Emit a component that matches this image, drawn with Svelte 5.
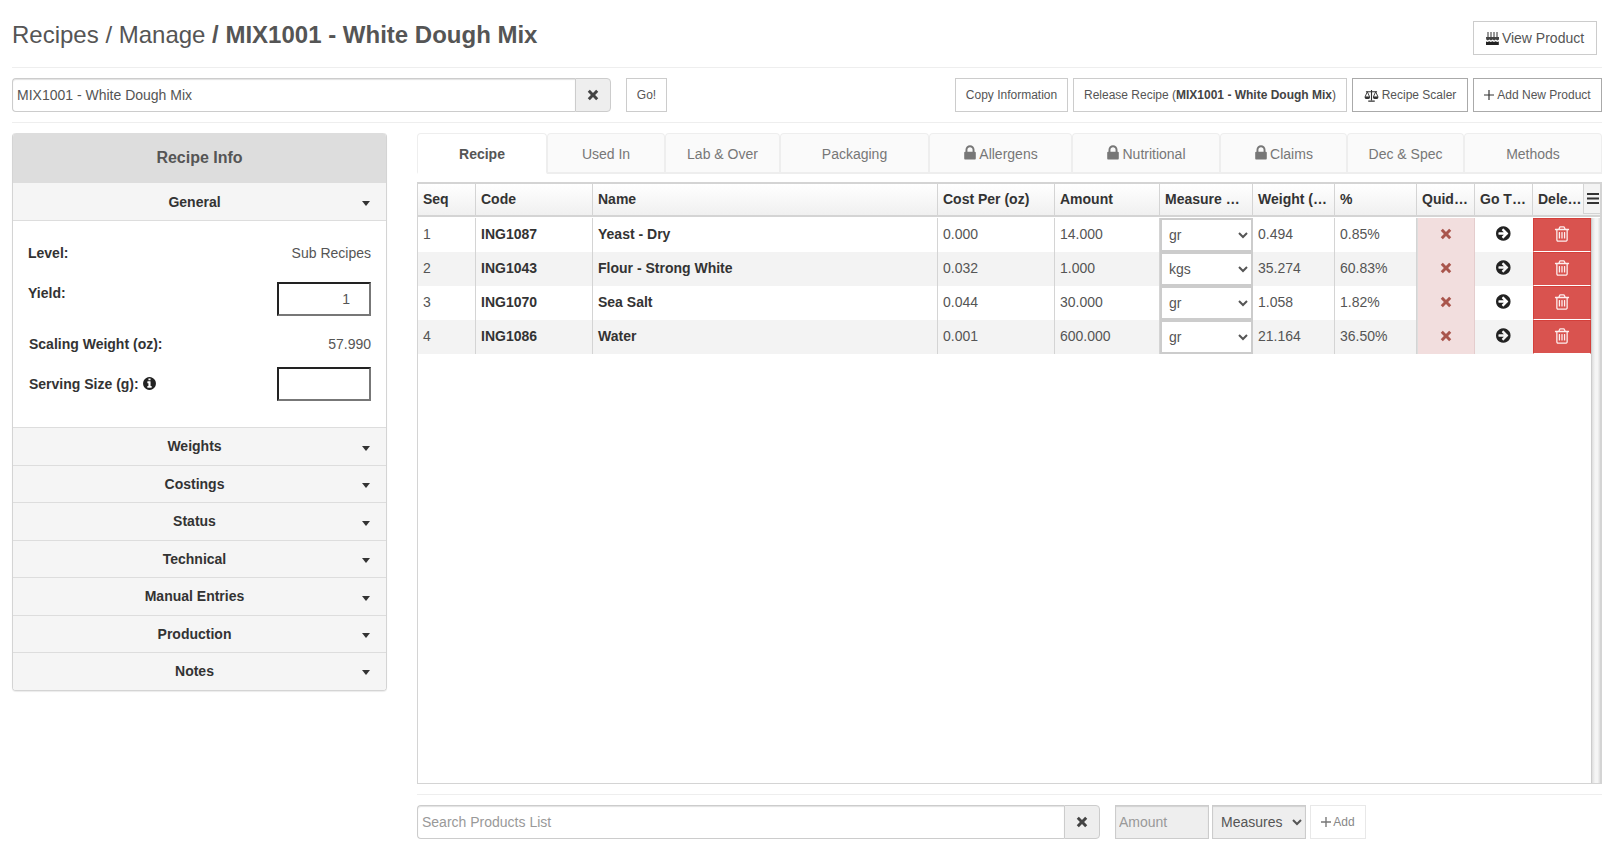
<script>
  const P = {
    lock: 'M640 768h512v-192q0-106-75-181t-181-75-181 75-75 181v192zm832 96v576q0 40-28 68t-68 28h-960q-40 0-68-28t-28-68v-576q0-40 28-68t68-28h32v-192q0-184 132-316t316-132 316 132 132 316v192h32q40 0 68 28t28 68z',
    go: 'M1285 896q0-27-18-45l-91-91-362-362q-18-18-45-18t-45 18l-91 91q-18 18-18 45t18 45l189 189h-502q-26 0-45 19t-19 45v128q0 26 19 45t45 19h502l-189 189q-19 19-19 45t19 45l91 91q18 18 45 18t45-18l362-362 91-91q18-18 18-45zm251 0q0 209-103 385.5t-279.5 279.5-385.5 103-385.5-103-279.5-279.5-103-385.5 103-385.5 279.5-279.5 385.5-103 385.5 103 279.5 279.5 103 385.5z',
    info: 'M1152 1376v-160q0-14-9-23t-23-9h-96v-512q0-14-9-23t-23-9h-320q-14 0-23 9t-9 23v160q0 14 9 23t23 9h96v320h-96q-14 0-23 9t-9 23v160q0 14 9 23t23 9h448q14 0 23-9t9-23zm-128-896v-160q0-14-9-23t-23-9h-192q-14 0-23 9t-9 23v160q0 14 9 23t23 9h192q14 0 23-9t9-23zm640 416q0 209-103 385.5t-279.5 279.5-385.5 103-385.5-103-279.5-279.5-103-385.5 103-385.5 279.5-279.5 385.5-103 385.5 103 279.5 279.5 103 385.5z',
    trash: 'M704 736v576q0 14-9 23t-23 9h-64q-14 0-23-9t-9-23v-576q0-14 9-23t23-9h64q14 0 23 9t9 23zm256 0v576q0 14-9 23t-23 9h-64q-14 0-23-9t-9-23v-576q0-14 9-23t23-9h64q14 0 23 9t9 23zm256 0v576q0 14-9 23t-23 9h-64q-14 0-23-9t-9-23v-576q0-14 9-23t23-9h64q14 0 23 9t9 23zm128 724v-948h-896v948q0 22 7 40.5t14.5 27 10.5 8.5h832q3 0 10.5-8.5t14.5-27 7-40.5zm-672-1076h448l-48-117q-7-9-17-11h-317q-10 2-17 11zm928 32v64q0 14-9 23t-23 9h-96v948q0 83-47 143.5t-113 60.5h-832q-66 0-113-58.5t-47-141.5v-952h-96q-14 0-23-9t-9-23v-64q0-14 9-23t23-9h309l70-167q15-37 54-63t79-26h320q40 0 79 26t54 63l70 167h309q14 0 23 9t9 23z'
  };
  const tabs = [
    { t: 'Recipe', w: 130, active: true },
    { t: 'Used In', w: 118 },
    { t: 'Lab & Over', w: 115 },
    { t: 'Packaging', w: 149 },
    { t: 'Allergens', w: 143, lock: true },
    { t: 'Nutritional', w: 148, lock: true },
    { t: 'Claims', w: 127, lock: true },
    { t: 'Dec & Spec', w: 117 },
    { t: 'Methods', w: 138 }
  ];
  const cols = ['Seq', 'Code', 'Name', 'Cost Per (oz)', 'Amount', 'Measure …', 'Weight (…', '%', 'Quid…', 'Go T…', 'Dele…'];
  const rows = [
    ['1', 'ING1087', 'Yeast - Dry', '0.000', '14.000', 'gr', '0.494', '0.85%'],
    ['2', 'ING1043', 'Flour - Strong White', '0.032', '1.000', 'kgs', '35.274', '60.83%'],
    ['3', 'ING1070', 'Sea Salt', '0.044', '30.000', 'gr', '1.058', '1.82%'],
    ['4', 'ING1086', 'Water', '0.001', '600.000', 'gr', '21.164', '36.50%']
  ];
  const sections = ['Weights', 'Costings', 'Status', 'Technical', 'Manual Entries', 'Production', 'Notes'];
</script>

{#snippet fa(name, cls)}
  <svg class={cls} viewBox="0 0 1792 1792" aria-hidden="true"><path d={P[name]} fill="currentColor" /></svg>
{/snippet}

{#snippet cross(cls)}
  <svg class={cls} viewBox="0 0 12 12" aria-hidden="true">
    <path d="M1.5 3.3 3.3 1.5 6 4.2 8.7 1.5 10.5 3.3 7.8 6 10.5 8.7 8.7 10.5 6 7.8 3.3 10.5 1.5 8.7 4.2 6z" fill="currentColor" />
  </svg>
{/snippet}

{#snippet caret()}
  <svg class="caret" viewBox="0 0 8 5" aria-hidden="true"><path d="M0 0h8L4 5z" fill="#333" /></svg>
{/snippet}

<div class="page">
  <header class="titlebar">
    <h1>Recipes / Manage <b>/ MIX1001 - White Dough Mix</b></h1>
    <button class="btn view">
      <svg class="cake" viewBox="0 0 13 14" aria-hidden="true">
        <path d="M2 1v5M5 1v5M8 1v5M11 1v5" stroke="#333" stroke-width="1" fill="none" />
        <path d="M0 6h13v2.6l-1.6.9-1.6-.9-1.6.9-1.6-.9-1.6.9-1.6-.9-1.6.9-1.6-.9z" fill="#444" />
        <path d="M0 10.4l1.6.7 1.6-.8 1.6.8 1.6-.8 1.6.8 1.6-.8 1.6.8 1.6-.7V14H0z" fill="#222" />
      </svg>
      View Product
    </button>
  </header>

  <section class="toolbar">
    <div class="group main-search">
      <input class="field" value="MIX1001 - White Dough Mix" />
      <span class="addon">{@render cross('x')}</span>
    </div>
    <button class="btn small go">Go!</button>
    <div class="actions">
      <button class="btn small copy">Copy Information</button>
      <button class="btn small release">Release Recipe (<b>MIX1001 - White Dough Mix</b>)</button>
      <button class="btn small dark scaler">
        <svg class="scale" viewBox="0 0 16 14" aria-hidden="true">
          <path d="M8 1v11M4.5 13h7M2 3h12" stroke="#333" stroke-width="1.2" fill="none" />
          <path d="M3.5 3 1 8.5h5zM12.5 3 10 8.5h5z" stroke="#333" stroke-width="1" fill="none" />
          <path d="M.6 8.5h5.8a2.9 2.4 0 0 1-5.8 0zM9.6 8.5h5.8a2.9 2.4 0 0 1-5.8 0z" fill="#333" />
        </svg>
        Recipe Scaler
      </button>
      <button class="btn small dark addnew">
        <svg class="plus" viewBox="0 0 11 11" aria-hidden="true"><path d="M5.5 0v11M0 5.5h11" stroke="#333" stroke-width="1.3" /></svg>
        Add New Product
      </button>
    </div>
  </section>

  <div class="content">
    <aside class="panel">
      <h2>Recipe Info</h2>
      <div class="acc first"><span>General</span>{@render caret()}</div>
      <div class="general">
        <div class="line level"><strong>Level:</strong><span>Sub Recipes</span></div>
        <div class="line yield"><strong>Yield:</strong><input class="box" value="1" /></div>
        <div class="line scaling"><strong>Scaling Weight (oz):</strong><span>57.990</span></div>
        <div class="line serving">
          <strong>Serving Size (g): {@render fa('info', 'info')}</strong>
          <input class="box" />
        </div>
      </div>
      {#each sections as s}
        <div class="acc"><span>{s}</span>{@render caret()}</div>
      {/each}
    </aside>

    <main class="right">
      <nav class="tabs">
        {#each tabs as tab}
          <div class="tab" class:active={tab.active} style:width="{tab.w}px">
            {#if tab.lock}{@render fa('lock', 'lock')}{/if}{tab.t}
          </div>
        {/each}
      </nav>

      <div class="grid">
        <div class="row head">
          {#each cols as c}<div class="cell">{c}</div>{/each}
          <div class="menu">
            <svg viewBox="0 0 12 11" aria-hidden="true"><path d="M0 1h12M0 5.5h12M0 10h12" stroke="#333" stroke-width="2" /></svg>
          </div>
        </div>
        <div class="body">
          <div class="rows">
            {#each rows as r, i}
              <div class="row data" class:alt={i % 2 === 1}>
                <div class="cell">{r[0]}</div>
                <div class="cell bold">{r[1]}</div>
                <div class="cell bold">{r[2]}</div>
                <div class="cell">{r[3]}</div>
                <div class="cell">{r[4]}</div>
                <div class="cell sel">
                  <select value={r[5]}>
                    <option>gr</option>
                    <option>kgs</option>
                  </select>
                </div>
                <div class="cell">{r[6]}</div>
                <div class="cell">{r[7]}</div>
                <div class="cell quid">{@render cross('qx')}</div>
                <div class="cell goto">{@render fa('go', 'arrow')}</div>
                <div class="cell del">{@render fa('trash', 'trash')}</div>
              </div>
            {/each}
          </div>
          <div class="scrollbar"></div>
        </div>
      </div>

      <div class="addbar">
        <div class="group prod-search">
          <input class="field" placeholder="Search Products List" />
          <span class="addon">{@render cross('x')}</span>
        </div>
        <input class="amount" placeholder="Amount" />
        <select class="measures"><option>Measures</option></select>
        <button class="btn add">
          <svg class="plus" viewBox="0 0 11 11" aria-hidden="true"><path d="M5.5 0v11M0 5.5h11" stroke="#777" stroke-width="1.5" /></svg>
          Add
        </button>
      </div>
    </main>
  </div>
</div>

<style>
  :global(body) {
    margin: 0;
    background: #fff;
    font-family: "Liberation Sans", Arial, sans-serif;
    font-size: 14px;
    color: #555;
  }
  * { box-sizing: border-box; }
  .page { width: 1622px; height: 868px; padding: 0 20px 0 12px; overflow: hidden; }

  .titlebar {
    height: 68px;
    border-bottom: 1px solid #eee;
    display: flex;
    justify-content: space-between;
    padding: 21px 5px 0 0;
  }
  h1 { margin: 0; font-size: 24px; font-weight: 400; line-height: 27px; color: #555; }
  h1 b { font-weight: 700; }

  .btn {
    font: inherit;
    background: #fff;
    border: 1px solid #ccc;
    color: #555;
    display: inline-flex;
    align-items: center;
    justify-content: center;
    padding: 0;
    white-space: nowrap;
  }
  .view { width: 124px; height: 34px; gap: 3px; }
  .cake { width: 13px; height: 14px; }

  .toolbar {
    height: 55px;
    border-bottom: 1px solid #eee;
    display: flex;
    padding-top: 10px;
    align-items: flex-start;
  }
  .group { display: flex; height: 34px; }
  .field {
    flex: 1;
    min-width: 0;
    height: 34px;
    border: 1px solid #ccc;
    border-right: 0;
    border-radius: 4px 0 0 4px;
    box-shadow: inset 0 1px 1px rgba(0,0,0,.12);
    font: inherit;
    color: #555;
    padding: 0 4px;
    outline: none;
  }
  .field::placeholder, .amount::placeholder { color: #999; opacity: 1; }
  .addon {
    width: 36px;
    background: #eee;
    border: 1px solid #ccc;
    border-radius: 0 4px 4px 0;
    display: flex;
    align-items: center;
    justify-content: center;
    color: #444;
  }
  .x { width: 14px; height: 14px; }
  .main-search { width: 599px; }
  .small { font-size: 12px; height: 34px; }
  .go { width: 41px; margin-left: 15px; }
  .actions { margin-left: auto; display: flex; gap: 5px; }
  .copy { width: 113px; }
  .release { width: 274px; }
  .dark { border-color: #aaa; }
  .scaler { width: 116px; gap: 3px; }
  .addnew { width: 129px; gap: 3px; }
  .scale { width: 15px; height: 13px; }
  .plus { width: 10px; height: 10px; }
  .small b { font-weight: 700; color: #444; }

  .content { display: flex; gap: 30px; padding-top: 10px; }

  .panel {
    width: 375px;
    height: 558px;
    border: 1px solid #d4d4d4;
    border-top: 0;
    border-radius: 4px;
    box-shadow: 0 1px 1px rgba(0,0,0,.08);
    overflow: hidden;
  }
  h2 {
    margin: 0 -1px;
    height: 50px;
    background: #ddd;
    font-size: 16px;
    font-weight: 700;
    color: #555;
    display: flex;
    align-items: center;
    justify-content: center;
    border-radius: 4px 4px 0 0;
  }
  .acc {
    height: 37.5px;
    background: #f5f5f5;
    border-bottom: 1px solid #ddd;
    color: #333;
    font-weight: 700;
    display: flex;
    align-items: center;
    padding: 0 16px 0 14px;
  }
  .acc span { flex: 1; text-align: center; }
  .acc:last-child { border-bottom: 0; padding-bottom: 2px; }
  .caret { width: 8px; height: 5px; margin-top: 4px; }
  .first { padding-top: 1px; }
  .general {
    height: 207.5px;
    border-bottom: 1px solid #ddd;
    padding: 0 15px;
  }
  .line { display: flex; justify-content: space-between; align-items: flex-start; color: #555; }
  .line strong { color: #333; font-weight: 700; }
  .level { padding-top: 24px; height: 61px; }
  .yield { height: 54px; }
  .yield strong { margin-top: 3px; }
  .scaling { height: 31px; }
  .scaling strong, .serving strong { margin-left: 1px; }
  .serving strong { margin-top: 9px; }
  .box {
    width: 94px;
    height: 34px;
    border: 2px solid;
    border-color: #222 #777 #777 #222;
    background: #fff;
    font: inherit;
    color: #555;
    text-align: right;
    padding: 0 19px 0 4px;
    outline: none;
  }
  .info { width: 15px; height: 15px; color: #222; vertical-align: -2px; margin-left: -1px; }

  .right { width: 1185px; }
  .tabs { display: flex; height: 41px; }
  .tab {
    height: 41px;
    background: #fafafa;
    border: 1px solid #eee;
    border-bottom: 2px solid #eee;
    border-radius: 4px 4px 0 0;
    display: flex;
    align-items: center;
    justify-content: center;
    color: #777;
    padding-top: 1px;
  }
  .tab.active {
    background: #fff;
    color: #555;
    font-weight: 700;
    border-bottom-color: #fff;
  }
  .lock { width: 18px; height: 18px; color: #777; margin-left: -2px; margin-top: -1px; }

  .grid {
    width: 1185px;
    height: 602px;
    margin-top: 8px;
    border: 1px solid #d4d4d4;
    border-top-width: 2px;
    border-right-width: 2px;
    display: flex;
    flex-direction: column;
  }
  .row {
    display: grid;
    grid-template-columns: 58px 117px 345px 117px 105px 93px 82px 82px 58px 58px 58px;
  }
  .head {
    height: 33px;
    background: linear-gradient(#fff, #f0f0f0);
    border-bottom: 2px solid #d4d4d4;
    color: #333;
    font-weight: 700;
    position: relative;
    flex: none;
  }
  .head .cell {
    border-right: 1px solid #d4d4d4;
    display: flex;
    align-items: center;
    padding-left: 5px;
    padding-bottom: 2px;
    white-space: nowrap;
    overflow: hidden;
  }
  .head .cell:nth-child(11) { border-right: 0; }
  .menu {
    position: absolute;
    right: -1px;
    top: -1px;
    width: 18px;
    height: 31px;
    border: 1px solid #d4d4d4;
    background: #f3f3f3;
    display: flex;
    align-items: center;
    justify-content: flex-end;
    padding-right: 1px;
  }
  .menu svg { width: 12px; height: 11px; }

  .body { flex: 1; display: flex; padding-top: 1px; min-height: 0; }
  .rows { width: 1173px; }
  .scrollbar {
    width: 10px;
    background: linear-gradient(90deg, #ddd, #f5f5f5 40%, #f5f5f5 70%, #ddd);
    border-left: 1px solid #ccc;
  }
  .data { height: 34px; background: #fff; }
  .data.alt { background: #f3f3f3; }
  .data .cell {
    display: flex;
    align-items: center;
    padding-left: 5px;
    padding-bottom: 2px;
    border-right: 1px solid #d4d4d4;
    color: #555;
  }
  .data .bold { font-weight: 700; color: #333; }
  .data .sel { padding: 0; border-right: 0; }
  select {
    font: inherit;
    color: #555;
  }
  .sel select {
    width: 100%;
    height: 34px;
    border: 2px solid #ccc;
    border-radius: 0;
    background: #fff;
    padding-left: 3px;
    outline: none;
  }
  .data .quid {
    background: #f2dede;
    justify-content: center;
    padding: 0 0 2px;
    color: #a9554c;
    border-right: 1px solid #e4cdcd;
    border-left: 1px solid #ddd;
  }
  .qx { width: 14px; height: 14px; }
  .data .goto { justify-content: center; padding: 0 0 4px; border-right: 0; color: #222; }
  .arrow { width: 17px; height: 17px; }
  .data .del {
    background: #d9534f;
    justify-content: center;
    padding: 0 0 2px;
    border: 1px solid #d43f3a;
    border-bottom: 1px solid #fff;
    color: #fff;
  }
  .trash { width: 18px; height: 18px; color: #fdeeee; }

  .addbar {
    margin-top: 10px;
    border-top: 1px solid #eee;
    padding-top: 10px;
    display: flex;
    align-items: flex-start;
  }
  .prod-search { width: 683px; }
  .amount {
    width: 94px;
    height: 34px;
    margin-left: 15px;
    background: #eee;
    border: 1px solid #ccc;
    box-shadow: inset 0 1px 1px rgba(0,0,0,.12);
    font: inherit;
    padding: 0 3px;
    outline: none;
  }
  .measures {
    width: 94px;
    height: 34px;
    margin-left: 3px;
    background: #eee;
    border: 1px solid #ccc;
    box-shadow: inset 0 1px 1px rgba(0,0,0,.12);
    padding-left: 4px;
    outline: none;
  }
  .add {
    width: 56px;
    height: 34px;
    margin-left: 4px;
    font-size: 12px;
    color: #888;
    border-color: #e8e8e8;
    gap: 2px;
  }
</style>
